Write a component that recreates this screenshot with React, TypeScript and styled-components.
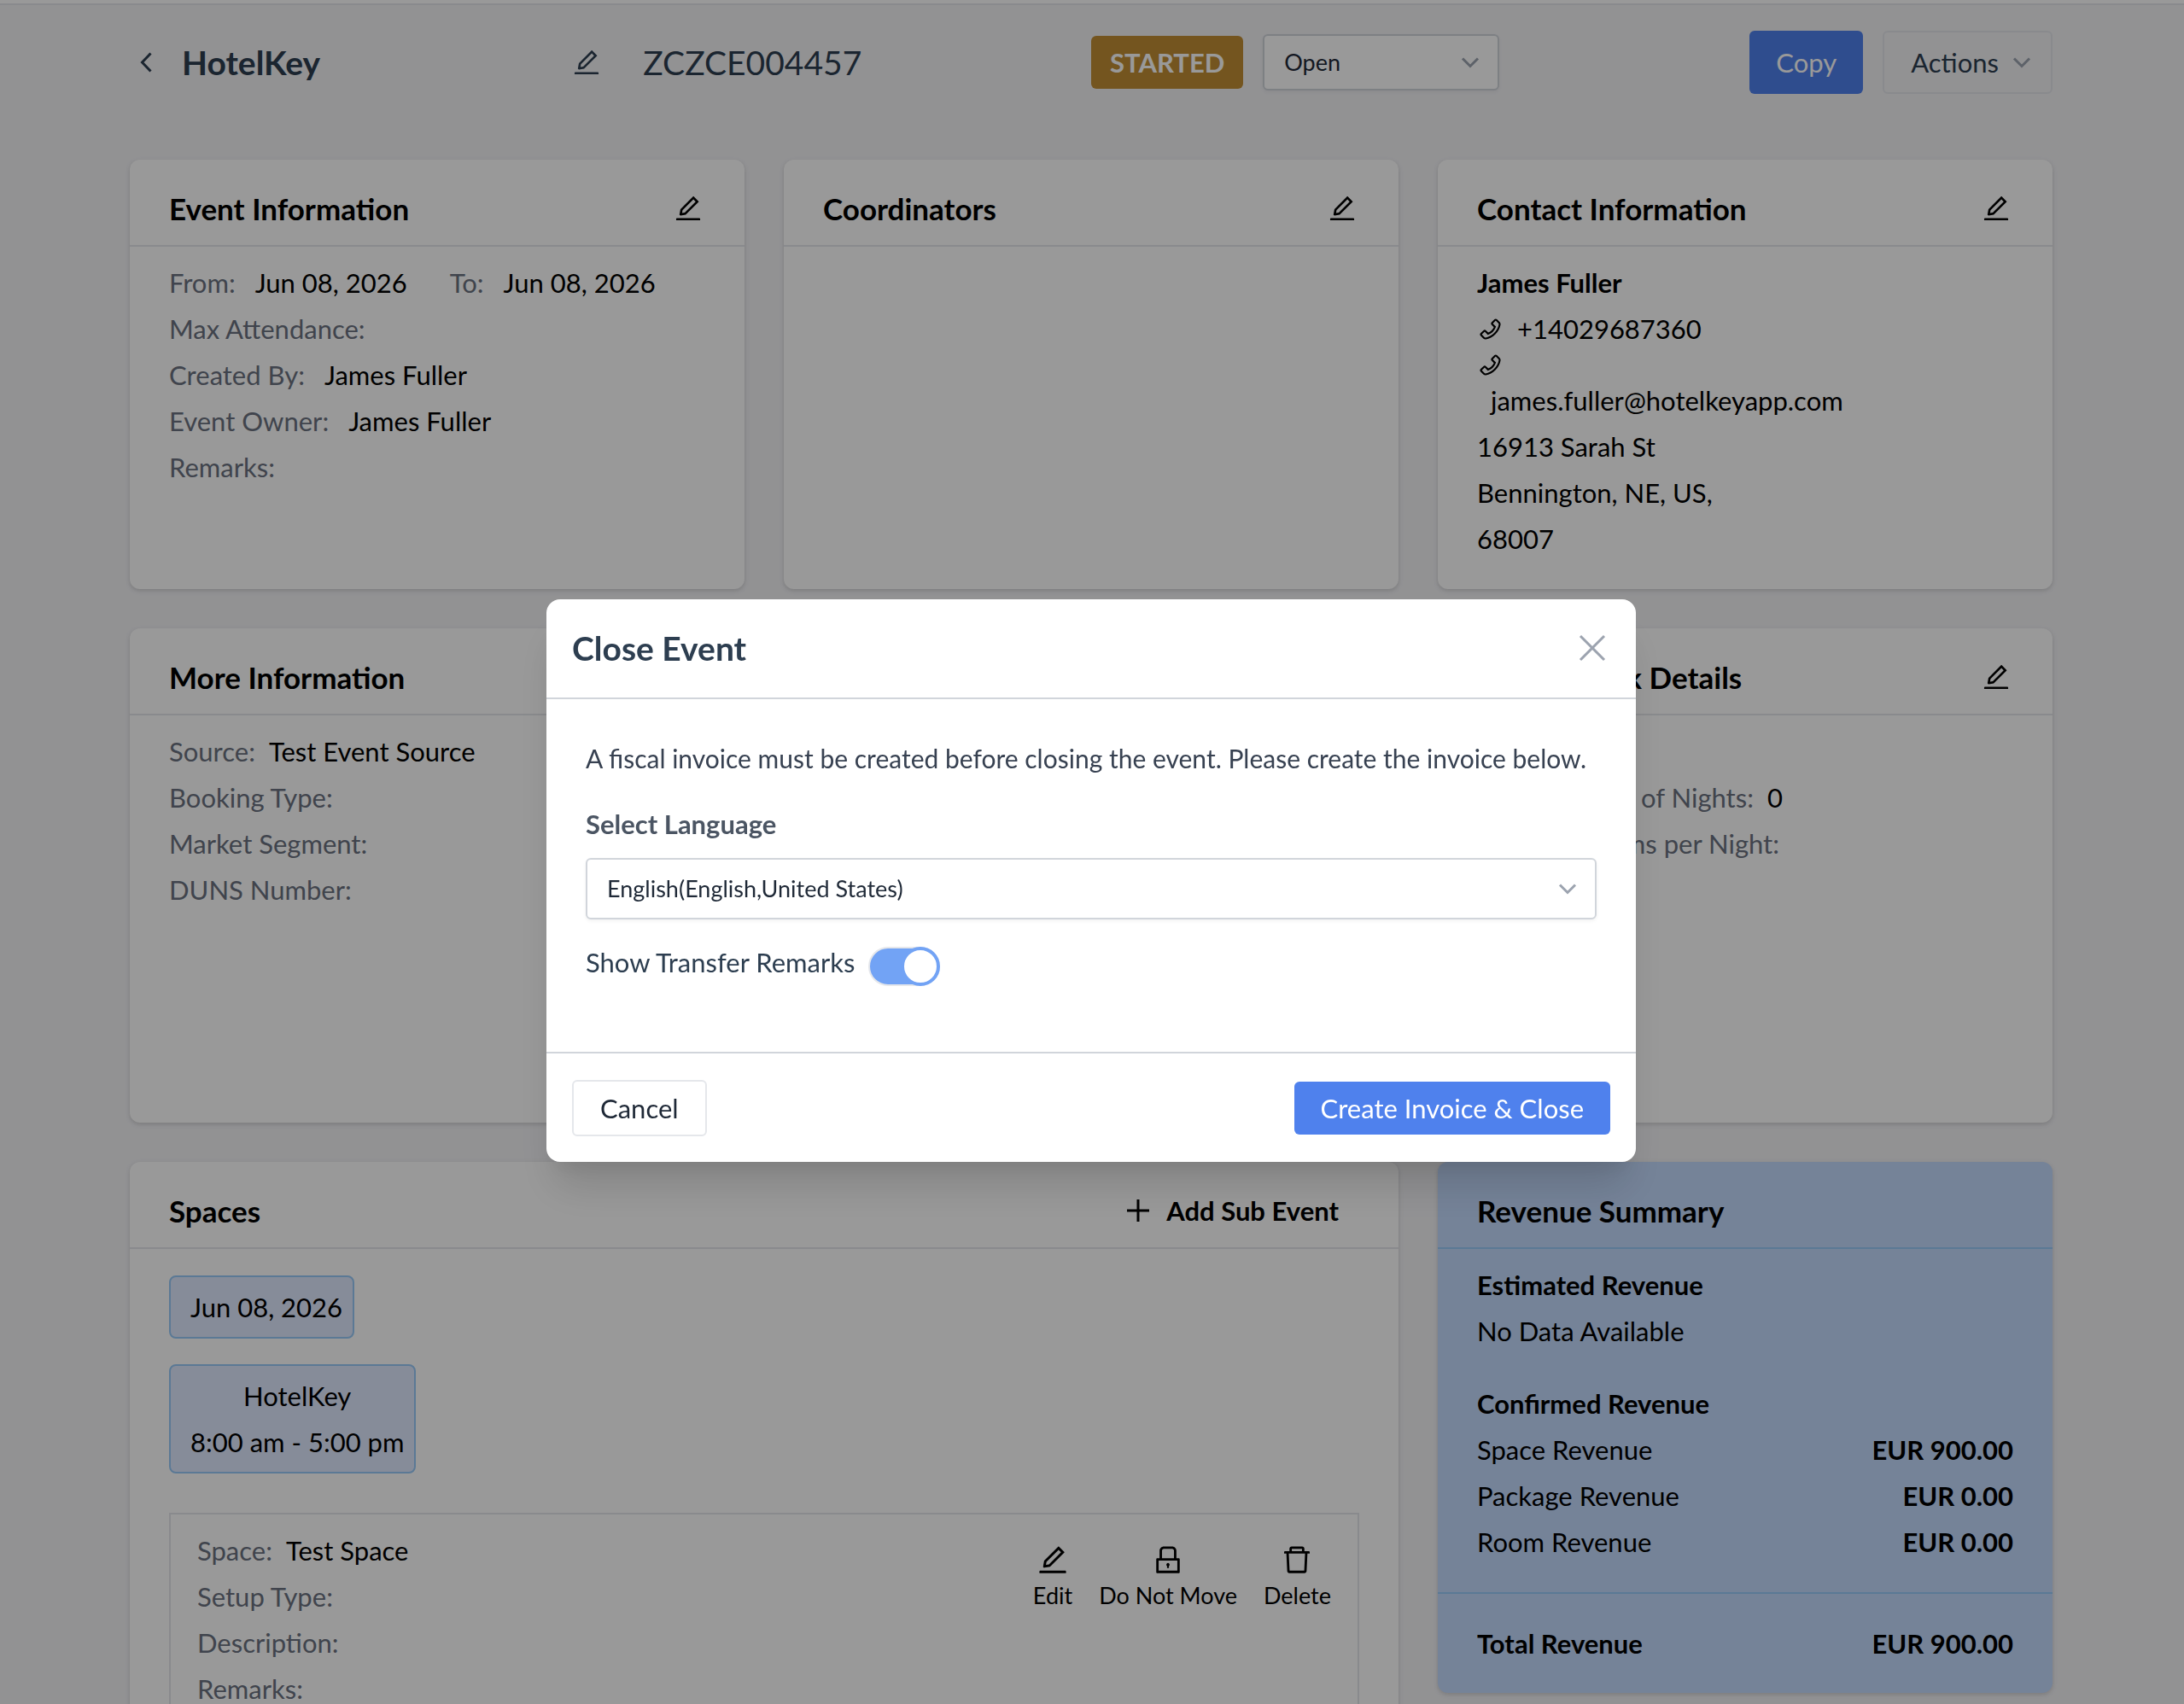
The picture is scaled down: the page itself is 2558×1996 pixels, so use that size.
import React, { useState } from "react";
import styled, { createGlobalStyle, css } from "styled-components";
import { AiOutlineDelete, AiOutlineEdit, AiOutlineLock, AiOutlinePhone } from "react-icons/ai";

const color = {
  ink: "#2d3e50",
  text: "#374151",
  label: "#6b7280",
  muted: "#9ca3af",
  line: "#e5e7eb",
  field: "#d1d5db",
  page: "#f3f3f6",
  primary: "#4f81ed",
  blueCard: "#c3dafe",
  blueLine: "#98caf9",
};

const GlobalStyle = createGlobalStyle`
  *, *::before, *::after { box-sizing: border-box; }
  body {
    margin: 0;
    background: ${color.page};
    color: #000;
    font-family: Lato, "Liberation Sans", sans-serif;
    font-size: 31px;
    line-height: 46px;
  }
  h1, h2, h3, p { margin: 0; }
  button, select, input { font: inherit; color: inherit; margin: 0; }
  button { cursor: pointer; }
`;

const Page = styled.div`
  height: 100vh;
  overflow: hidden;
  background: ${color.page};
`;

const NavEdge = styled.div`
  height: 6px;
  background: #fff;
  border-bottom: 2px solid ${color.line};
`;

const Content = styled.main`
  padding: 30px 154px 46px 152px;
`;

const EventHeader = styled.header`
  display: grid;
  grid-template-columns: 26.7% 23.3% 1fr auto;
  align-items: center;
  margin-bottom: 77px;
  color: ${color.ink};
`;

const TitleGroup = styled.div`
  display: flex;
  align-items: center;
  padding: 0 48px 0 12px;
`;

const EventName = styled.h1`
  flex: 1;
  margin-left: 35px;
  font-size: 39px;
  font-weight: 700;
`;

const EventNumber = styled.span`
  font-size: 39px;
`;

const StatusGroup = styled.div`
  display: flex;
  align-items: center;
  gap: 23px;
`;

const StatusBadge = styled.span`
  padding: 8px 22px;
  border-radius: 6px;
  background: #c28e34;
  color: #fff;
  font-weight: 700;
`;

const ButtonGroup = styled.div`
  display: flex;
  gap: 23px;
`;

const IconButton = styled.button`
  display: flex;
  padding: 0;
  border: 0;
  background: none;
`;

const Button = styled.button<{ $primary?: boolean; $tall?: boolean }>`
  display: flex;
  align-items: center;
  gap: 16px;
  padding: ${(p) => (p.$tall ? "12px 23px 12px 31px" : "8px 31px")};
  border: 2px solid ${color.line};
  border-radius: 6px;
  background: transparent;
  ${(p) =>
    p.$primary &&
    css`
      border: 0;
      padding: ${p.$tall ? "14px" : "8px"} 31px;
      background: ${color.primary};
      color: #fff;
    `}
`;

const SelectBox = styled.span<{ $wide?: boolean }>`
  display: grid;
  align-items: center;
  width: ${(p) => (p.$wide ? "100%" : "277px")};
  > * {
    grid-area: 1 / 1;
  }
  > svg {
    justify-self: end;
    margin-right: 23px;
    pointer-events: none;
  }
`;

const Select = styled.select<{ $tall?: boolean }>`
  appearance: none;
  width: 100%;
  height: ${(p) => (p.$tall ? "72px" : "66px")};
  padding: 0 60px 0 23px;
  border: 2px solid ${color.field};
  border-radius: 6px;
  background: #fff;
  box-shadow: 0 2px 4px rgba(0, 0, 0, 0.05);
  color: #1f2937;
  font-size: 27px;
`;

const CardGrid = styled.div`
  display: grid;
  grid-template-columns: repeat(3, minmax(0, 1fr));
  gap: 46px;
  align-items: start;
`;

const Card = styled.section<{ $blue?: boolean; $span?: number; $min?: number }>`
  grid-column: span ${(p) => p.$span ?? 1};
  align-self: ${(p) => (p.$blue ? "start" : "stretch")};
  min-height: ${(p) => p.$min ?? 0}px;
  border-radius: 12px;
  background: ${(p) => (p.$blue ? color.blueCard : "#fff")};
  box-shadow: 0 2px 6px rgba(0, 0, 0, 0.1), 0 2px 4px rgba(0, 0, 0, 0.06);
`;

const CardHeader = styled.div<{ $blue?: boolean; $end?: number }>`
  display: flex;
  align-items: center;
  justify-content: space-between;
  padding: 30px ${(p) => p.$end ?? 48}px 16px 46px;
  border-bottom: 2px solid ${(p) => (p.$blue ? color.blueLine : color.line)};
`;

const CardTitle = styled.h2`
  font-size: 35px;
  line-height: 54px;
  font-weight: 700;
`;

const CardBody = styled.div`
  padding: 19px 46px 28px;
`;

const Row = styled.div<{ $between?: boolean; $bold?: boolean }>`
  display: flex;
  justify-content: ${(p) => (p.$between ? "space-between" : "flex-start")};
  min-height: 46px;
  margin-bottom: 8px;
  font-weight: ${(p) => (p.$bold ? 700 : 400)};
`;

const Label = styled.span`
  color: ${color.label};
`;

const Value = styled.span<{ $gap?: number }>`
  margin-left: ${(p) => p.$gap ?? 23}px;
`;

const DateGroup = styled.span`
  margin-right: 50px;
`;

const PhoneLine = styled.div`
  display: flex;
  align-items: center;
  gap: 16px;
`;

const MailIconLine = styled.div`
  display: flex;
  align-items: center;
  height: 38px;
`;

const MailLine = styled(Row)`
  padding-left: 16px;
`;

const AddButton = styled(IconButton)`
  align-items: center;
  gap: 20px;
  font-weight: 700;
`;

const SpacesBody = styled.div`
  display: flex;
  flex-direction: column;
  align-items: flex-start;
  padding: 31px 46px 46px;
`;

const Chip = styled.button`
  margin-bottom: 30px;
  padding: 12px 12px 12px 23px;
  border: 2px solid ${color.blueLine};
  border-radius: 8px;
  background: #e0eaff;
  color: #000;
  text-align: center;
`;

const ChipLine = styled.span`
  display: block;
  & + & {
    margin-top: 8px;
  }
`;

const SpaceBox = styled.div`
  display: flex;
  align-self: stretch;
  justify-content: space-between;
  margin-top: 16px;
  padding: 19px 31px;
  border: 2px solid ${color.line};
`;

const ActionList = styled.div`
  display: flex;
  align-items: flex-start;
  gap: 31px;
  padding-top: 14px;
`;

const ActionButton = styled.button`
  display: flex;
  flex-direction: column;
  align-items: center;
  gap: 2px;
  padding: 0;
  border: 0;
  background: none;
  font-size: 27px;
  line-height: 40px;
`;

const Strong = styled.strong`
  font-weight: 700;
`;

const Confirmed = styled.div`
  margin-top: 39px;
`;

const TotalRow = styled.div`
  display: flex;
  justify-content: space-between;
  padding: 35px 46px;
  border-top: 2px solid ${color.blueLine};
  font-weight: 700;
`;

const Overlay = styled.div`
  position: fixed;
  inset: 0;
  display: flex;
  align-items: center;
  justify-content: center;
  padding: 66px 2px 0 0;
  background: rgba(0, 0, 0, 0.4);
`;

const Modal = styled.div`
  width: 1276px;
  max-width: 100%;
  border-radius: 16px;
  background: #fff;
  box-shadow: 0 38px 48px -10px rgba(0, 0, 0, 0.14), 0 19px 19px -10px rgba(0, 0, 0, 0.06);
  color: ${color.text};
`;

const ModalHeader = styled.div`
  display: flex;
  align-items: center;
  justify-content: space-between;
  padding: 34px 35px 35px 30px;
  border-bottom: 2px solid ${color.field};
  color: ${color.ink};
`;

const ModalTitle = styled.h2`
  font-size: 39px;
  font-weight: 700;
`;

const ModalBody = styled.div`
  padding: 46px 46px 77px;
`;

const Message = styled.p`
  font-size: 30px;
`;

const FieldLabel = styled.label`
  display: block;
  margin: 31px 0 17px;
  color: #4b5563;
  font-weight: 700;
`;

const ToggleLabel = styled.label`
  display: flex;
  align-items: center;
  gap: 16px;
  margin-top: 22px;
  color: ${color.ink};
`;

const Toggle = styled.input`
  appearance: none;
  display: flex;
  align-items: center;
  width: 84px;
  height: 46px;
  margin-top: 10px;
  border: 2px solid ${color.line};
  border-radius: 23px;
  background: ${color.line};
  &::before {
    content: "";
    flex: none;
    width: 46px;
    height: 46px;
    border: 4px solid ${color.line};
    border-radius: 50%;
    background: #fff;
  }
  &:checked {
    justify-content: flex-end;
    background: #72a3f5;
  }
  &:checked::before {
    margin-right: -2px;
    border-color: #72a3f5;
  }
`;

const ModalFooter = styled.div`
  display: flex;
  align-items: center;
  justify-content: space-between;
  padding: 31px 30px 30px;
  border-top: 2px solid ${color.field};
  color: #1f2937;
`;

function ChevronDown() {
  return (
    <svg width="22" height="22" viewBox="0 0 22 22" fill="none" stroke={color.muted} strokeWidth="3" aria-hidden="true">
      <path d="M2 6.500l9 9 9-9" />
    </svg>
  );
}

function EditButton({ label }: { label: string }) {
  return (
    <IconButton type="button" aria-label={label}>
      <AiOutlineEdit size={36} />
    </IconButton>
  );
}

function Field({ label, value, gap }: { label: string; value?: string; gap?: number }) {
  return (
    <Row>
      <Label>{label}:</Label>
      {value && <Value $gap={gap}>{value}</Value>}
    </Row>
  );
}

function InfoCard({ title, min, children }: { title: string; min: number; children?: React.ReactNode }) {
  return (
    <Card $min={min}>
      <CardHeader>
        <CardTitle>{title}</CardTitle>
        <EditButton label={`Edit ${title}`} />
      </CardHeader>
      <CardBody>{children}</CardBody>
    </Card>
  );
}

const revenue = [
  ["Space Revenue", "EUR 900.00"],
  ["Package Revenue", "EUR 0.00"],
  ["Room Revenue", "EUR 0.00"],
];

function CloseEventDialog() {
  const [remarks, setRemarks] = useState(true);
  return (
    <Overlay>
      <Modal role="dialog" aria-modal="true" aria-labelledby="close-event-title">
        <ModalHeader>
          <ModalTitle id="close-event-title">Close Event</ModalTitle>
          <IconButton type="button" aria-label="Close">
            <svg width="32" height="32" viewBox="0 0 32 32" fill="none" stroke={color.muted} strokeWidth="3" aria-hidden="true">
              <path d="M2 2l28 28M30 2L2 30" />
            </svg>
          </IconButton>
        </ModalHeader>
        <ModalBody>
          <Message>A fiscal invoice must be created before closing the event. Please create the invoice below.</Message>
          <FieldLabel htmlFor="language">Select Language</FieldLabel>
          <SelectBox $wide>
            <Select id="language" $tall>
              <option>English(English,United States)</option>
            </Select>
            <ChevronDown />
          </SelectBox>
          <ToggleLabel>
            Show Transfer Remarks
            <Toggle type="checkbox" checked={remarks} onChange={(e) => setRemarks(e.target.checked)} />
          </ToggleLabel>
        </ModalBody>
        <ModalFooter>
          <Button type="button">Cancel</Button>
          <Button type="button" $primary>
            Create Invoice &amp; Close
          </Button>
        </ModalFooter>
      </Modal>
    </Overlay>
  );
}

export default function App() {
  return (
    <Page>
      <GlobalStyle />
      <NavEdge />
      <Content>
        <EventHeader>
          <TitleGroup>
            <IconButton type="button" aria-label="Back">
              <svg width="14" height="24" viewBox="0 0 14 24" fill="none" stroke="currentColor" strokeWidth="3" aria-hidden="true">
                <path d="M12.500 1.500L2.500 12l10 10.500" />
              </svg>
            </IconButton>
            <EventName>HotelKey</EventName>
            <EditButton label="Edit event name" />
          </TitleGroup>
          <EventNumber>ZCZCE004457</EventNumber>
          <StatusGroup>
            <StatusBadge>STARTED</StatusBadge>
            <SelectBox>
              <Select aria-label="Event status">
                <option>Open</option>
              </Select>
              <ChevronDown />
            </SelectBox>
          </StatusGroup>
          <ButtonGroup>
            <Button type="button" $primary $tall>
              Copy
            </Button>
            <Button type="button" $tall>
              Actions
              <ChevronDown />
            </Button>
          </ButtonGroup>
        </EventHeader>

        <CardGrid>
          <InfoCard title="Event Information" min={503}>
            <Row>
              <DateGroup>
                <Label>From:</Label>
                <Value>Jun 08, 2026</Value>
              </DateGroup>
              <Label>To:</Label>
              <Value>Jun 08, 2026</Value>
            </Row>
            <Field label="Max Attendance" />
            <Field label="Created By" value="James Fuller" />
            <Field label="Event Owner" value="James Fuller" />
            <Field label="Remarks" />
          </InfoCard>
          <InfoCard title="Coordinators" min={503} />
          <InfoCard title="Contact Information" min={503}>
            <Row $bold>James Fuller</Row>
            <PhoneLine>
              <AiOutlinePhone size={31} />
              +14029687360
            </PhoneLine>
            <MailIconLine>
              <AiOutlinePhone size={31} />
            </MailIconLine>
            <MailLine>james.fuller@hotelkeyapp.com</MailLine>
            <Row>16913 Sarah St</Row>
            <Row>Bennington, NE, US,</Row>
            <Row>68007</Row>
          </InfoCard>

          <InfoCard title="More Information" min={579}>
            <Field label="Source" value="Test Event Source" gap={16} />
            <Field label="Booking Type" />
            <Field label="Market Segment" />
            <Field label="DUNS Number" />
          </InfoCard>
          <InfoCard title="Billing" min={579} />
          <InfoCard title="Group Block Details" min={579}>
            <Field label="Group Block" />
            <Field label="Total Number of Nights" value="0" gap={16} />
            <Field label="Average Rooms per Night" />
          </InfoCard>

          <Card $span={2}>
            <CardHeader $end={70}>
              <CardTitle>Spaces</CardTitle>
              <AddButton type="button">
                <svg width="26" height="26" viewBox="0 0 26 26" fill="none" stroke="currentColor" strokeWidth="3" aria-hidden="true">
                  <path d="M13 0v26M0 13h26" />
                </svg>
                Add Sub Event
              </AddButton>
            </CardHeader>
            <SpacesBody>
              <Chip type="button">
                <ChipLine>Jun 08, 2026</ChipLine>
              </Chip>
              <Chip type="button">
                <ChipLine>HotelKey</ChipLine>
                <ChipLine>8:00 am - 5:00 pm</ChipLine>
              </Chip>
              <SpaceBox>
                <div>
                  <Field label="Space" value="Test Space" gap={16} />
                  <Field label="Setup Type" />
                  <Field label="Description" />
                  <Field label="Remarks" />
                </div>
                <ActionList>
                  <ActionButton type="button">
                    <AiOutlineEdit size={40} />
                    Edit
                  </ActionButton>
                  <ActionButton type="button">
                    <AiOutlineLock size={40} />
                    Do Not Move
                  </ActionButton>
                  <ActionButton type="button">
                    <AiOutlineDelete size={40} />
                    Delete
                  </ActionButton>
                </ActionList>
              </SpaceBox>
            </SpacesBody>
          </Card>

          <Card $blue>
            <CardHeader $blue>
              <CardTitle>Revenue Summary</CardTitle>
            </CardHeader>
            <CardBody>
              <Row $bold>Estimated Revenue</Row>
              <Row>No Data Available</Row>
              <Confirmed>
                <Row $bold>Confirmed Revenue</Row>
                {revenue.map(([name, amount]) => (
                  <Row key={name} $between>
                    <span>{name}</span>
                    <Strong>{amount}</Strong>
                  </Row>
                ))}
              </Confirmed>
            </CardBody>
            <TotalRow>
              <span>Total Revenue</span>
              <span>EUR 900.00</span>
            </TotalRow>
          </Card>
        </CardGrid>
      </Content>
      <CloseEventDialog />
    </Page>
  );
}
